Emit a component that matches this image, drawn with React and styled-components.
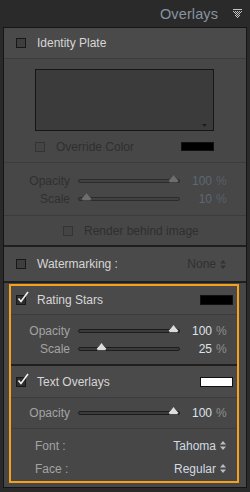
import React from "react";
import styled, { createGlobalStyle } from "styled-components";

const GlobalStyle = createGlobalStyle`
  html, body {
    margin: 0;
    padding: 0;
    background: #2a2a2a;
  }
  body {
    font-family: "Liberation Sans", Arial, sans-serif;
    font-size: 12px;
  }
`;

const Wrap = styled.div`
  width: 250px;
  height: 492px;
  background: #2a2a2a;
  overflow: hidden;
`;

/* HEADER */
const Header = styled.div`
  height: 27px;
  display: flex;
  align-items: center;
  justify-content: flex-end;
  gap: 15px;
  padding-right: 8px;
  box-sizing: border-box;
`;

const Title = styled.span`
  font-size: 14.5px;
  color: #8894a0;
  letter-spacing: 0.1px;
`;

/* PANEL */
const Panel = styled.div`
  margin-left: 3px;
  width: 244px;
  box-sizing: border-box;
  border: 1px solid #151515;
  background: #474747;
`;

const Section = styled.div`
  border-bottom: 2px solid #1f1f1f;
`;

const HeadRow = styled.div`
  height: ${(p) => p.$h || 30}px;
  display: flex;
  align-items: center;
  padding: 0 ${(p) => p.$pr || 0}px 0 ${(p) => p.$pl || 12}px;
  border-bottom: ${(p) => (p.$line ? "1px solid #3c3c3c" : "none")};
  background: #4a4a4a;
`;

const Label = styled.span`
  margin-left: 11px;
  color: ${(p) => (p.$dim ? "#2f2f2f" : "#d6d6d6")};
`;

const Right = styled.div`
  margin-left: auto;
  display: flex;
  align-items: center;
  gap: 4px;
  color: ${(p) => (p.$dim ? "#303030" : "#d3dae2")};
`;

const Swatch = styled.div`
  margin-left: auto;
  width: ${(p) => p.$w || 33}px;
  height: ${(p) => p.$h || 10}px;
  box-sizing: border-box;
  background: ${(p) => p.$color};
  border: 1px solid #111;
`;

/* CHECKBOX */
const Box = styled.div`
  position: relative;
  width: 10px;
  height: 10px;
  flex: none;
  box-sizing: border-box;
  border: 1px solid ${(p) => (p.$dim ? "#343434" : "#181818")};
  background: ${(p) => (p.$checked ? "#2e2e2e" : p.$dim ? "#444" : "#3e3e3e")};

  svg {
    position: absolute;
    left: 0;
    top: -5px;
    overflow: visible;
  }
`;

const Check = ({ checked, dim }) => (
  <Box $checked={checked} $dim={dim}>
    {checked && (
      <svg width="13" height="13" viewBox="0 0 13 13">
        <path d="M1.5 7.5 L4 10.5 L11 1" fill="none" stroke="#f2f2f2" strokeWidth="1.6" />
      </svg>
    )}
  </Box>
);

/* IDENTITY PLATE */
const PlateBody = styled.div`
  padding: 10px 0 0 31px;
`;

const PlateBox = styled.div`
  position: relative;
  width: 179px;
  height: 62px;
  box-sizing: border-box;
  border: 1px solid #161616;
  background: #3b3b3b;

  svg {
    position: absolute;
    right: 6px;
    bottom: 3px;
  }
`;

const OptionRow = styled.div`
  height: ${(p) => p.$h}px;
  display: flex;
  align-items: center;
  padding: 0 ${(p) => p.$pr || 0}px 0 ${(p) => p.$pl}px;
  border-bottom: ${(p) => (p.$line ? "1px solid #3c3c3c" : "none")};
`;

/* SLIDERS */
const SliderBlock = styled.div`
  padding: ${(p) => p.$pt}px 0 ${(p) => p.$pb}px;
  border-bottom: ${(p) => (p.$line ? "1px solid #3c3c3c" : "none")};
`;

const SliderRow = styled.div`
  height: 18px;
  display: flex;
  align-items: center;
`;

const SliderLabel = styled.span`
  width: ${(p) => p.$w}px;
  margin-right: 8px;
  text-align: right;
  color: ${(p) => (p.$dim ? "#303030" : "#a3a3a3")};
`;

const Track = styled.div`
  position: relative;
  width: 102px;
  height: 4px;
  box-sizing: border-box;
  border: 1px solid ${(p) => (p.$dim ? "#2c2c2c" : "#1c1c1c")};
  border-radius: 2px;
  background: ${(p) => (p.$dim ? "#414141" : "#3c3c3c")};

  svg {
    position: absolute;
    top: -6px;
  }
`;

const ThumbSpot = styled.div`
  position: absolute;
  top: 0;
`;

const Value = styled.span`
  width: 32px;
  text-align: right;
  color: ${(p) => (p.$dim ? "#5c6771" : "#dde3ea")};
`;

const Pct = styled.span`
  margin-left: 4px;
  color: ${(p) => (p.$dim ? "#56606a" : "#8e8e8e")};
`;

const Thumb = ({ dim }) => (
  <svg width="11" height="10" viewBox="0 0 11 10">
    <path
      d="M5.5 0.5 L9 5 L10.5 6.5 L9.5 8.5 L1.5 8.5 L0.5 6.5 L2 5 Z"
      fill={dim ? "#6e6e6e" : "#dcdcdc"}
      stroke={dim ? "#3a3a3a" : "#2a2a2a"}
      strokeWidth="0.6"
    />
  </svg>
);

const Slider = ({ label, value, labelW, dim }) => (
  <SliderRow>
    <SliderLabel $w={labelW} $dim={dim}>
      {label}
    </SliderLabel>
    <Track $dim={dim}>
      <ThumbSpot style={{ left: value * 0.96 - 7.5 }}>
        <Thumb dim={dim} />
      </ThumbSpot>
    </Track>
    <Value $dim={dim}>{value}</Value>
    <Pct $dim={dim}>%</Pct>
  </SliderRow>
);

const UpDown = ({ color }) => (
  <svg width="6" height="9" viewBox="0 0 6 9">
    <path d="M3 0 L6 3.5 L0 3.5 Z M0 5.5 L6 5.5 L3 9 Z" fill={color} />
  </svg>
);

/* ORANGE HIGHLIGHT */
const Highlight = styled.div`
  margin: 1px 7px 4px 5px;
  border: 2px solid #f7a11a;
`;

const SubSection = styled.div`
  border-bottom: ${(p) => (p.$last ? "none" : "2px solid #1f1f1f")};
`;

const FieldRow = styled.div`
  height: 23px;
  display: flex;
  align-items: center;
  padding: 0 11px 0 24px;
`;

const FieldLabel = styled.span`
  color: #a3a3a3;
`;

const Fields = styled.div`
  padding: 5px 0 1px;
`;

const Funnel = () => (
  <svg width="9" height="10" viewBox="0 0 9 10">
    <rect x="0" y="0" width="9" height="1" fill="#c4c4c4" />
    {[2, 3, 4, 5, 6, 7, 8].map((r) =>
      Array.from({ length: 9 }).map((_, x) => {
        const half = (9 - r) / 2 + 0.5;
        if (Math.abs(x - 4) > half || (x + r) % 2) return null;
        return <rect key={r + "-" + x} x={x} y={r} width="1" height="1" fill="#c4c4c4" />;
      })
    )}
  </svg>
);

export default function App() {
  return (
    <Wrap>
      <GlobalStyle />
      <Header>
        <Title>Overlays</Title>
        <Funnel />
      </Header>

      <Panel>
        {/* Identity Plate */}
        <Section>
          <HeadRow $h={30} $line>
            <Check />
            <Label>Identity Plate</Label>
          </HeadRow>
          <PlateBody>
            <PlateBox>
              <svg width="5" height="3" viewBox="0 0 5 3">
                <path d="M0 0 L5 0 L2.5 3 Z" fill="#1e1e1e" />
              </svg>
            </PlateBox>
          </PlateBody>
          <OptionRow $h={31} $pl={31} $pr={32} $line>
            <Check dim />
            <Label $dim>Override Color</Label>
            <Swatch $color="#000" $w={33} $h={9} />
          </OptionRow>
          <SliderBlock $pt={9} $pb={7} $line>
            <Slider label="Opacity" value={100} labelW={66} dim />
            <Slider label="Scale" value={10} labelW={66} dim />
          </SliderBlock>
          <OptionRow $h={29} $pl={59}>
            <Check dim />
            <Label $dim>Render behind image</Label>
          </OptionRow>
        </Section>

        {/* Watermarking */}
        <Section>
          <HeadRow $h={34} $pr={20}>
            <Check />
            <Label>Watermarking :</Label>
            <Right $dim>
              None
              <UpDown color="#333" />
            </Right>
          </HeadRow>
        </Section>

        <Highlight>
          {/* Rating Stars */}
          <SubSection>
            <HeadRow $h={28} $pl={5} $pr={4} $line>
              <Check checked />
              <Label>Rating Stars</Label>
              <Swatch $color="#000" />
            </HeadRow>
            <SliderBlock $pt={7} $pb={6}>
              <Slider label="Opacity" value={100} labelW={59} />
              <Slider label="Scale" value={25} labelW={59} />
            </SliderBlock>
          </SubSection>

          {/* Text Overlays */}
          <SubSection $last>
            <HeadRow $h={31} $pl={5} $pr={4} $line>
              <Check checked />
              <Label>Text Overlays</Label>
              <Swatch $color="#fff" />
            </HeadRow>
            <SliderBlock $pt={6} $pb={6} $line>
              <Slider label="Opacity" value={100} labelW={59} />
            </SliderBlock>
            <Fields>
              <FieldRow>
                <FieldLabel>Font :</FieldLabel>
                <Right>
                  Tahoma
                  <UpDown color="#b8bec4" />
                </Right>
              </FieldRow>
              <FieldRow>
                <FieldLabel>Face :</FieldLabel>
                <Right>
                  Regular
                  <UpDown color="#b8bec4" />
                </Right>
              </FieldRow>
            </Fields>
          </SubSection>
        </Highlight>
      </Panel>
    </Wrap>
  );
}
